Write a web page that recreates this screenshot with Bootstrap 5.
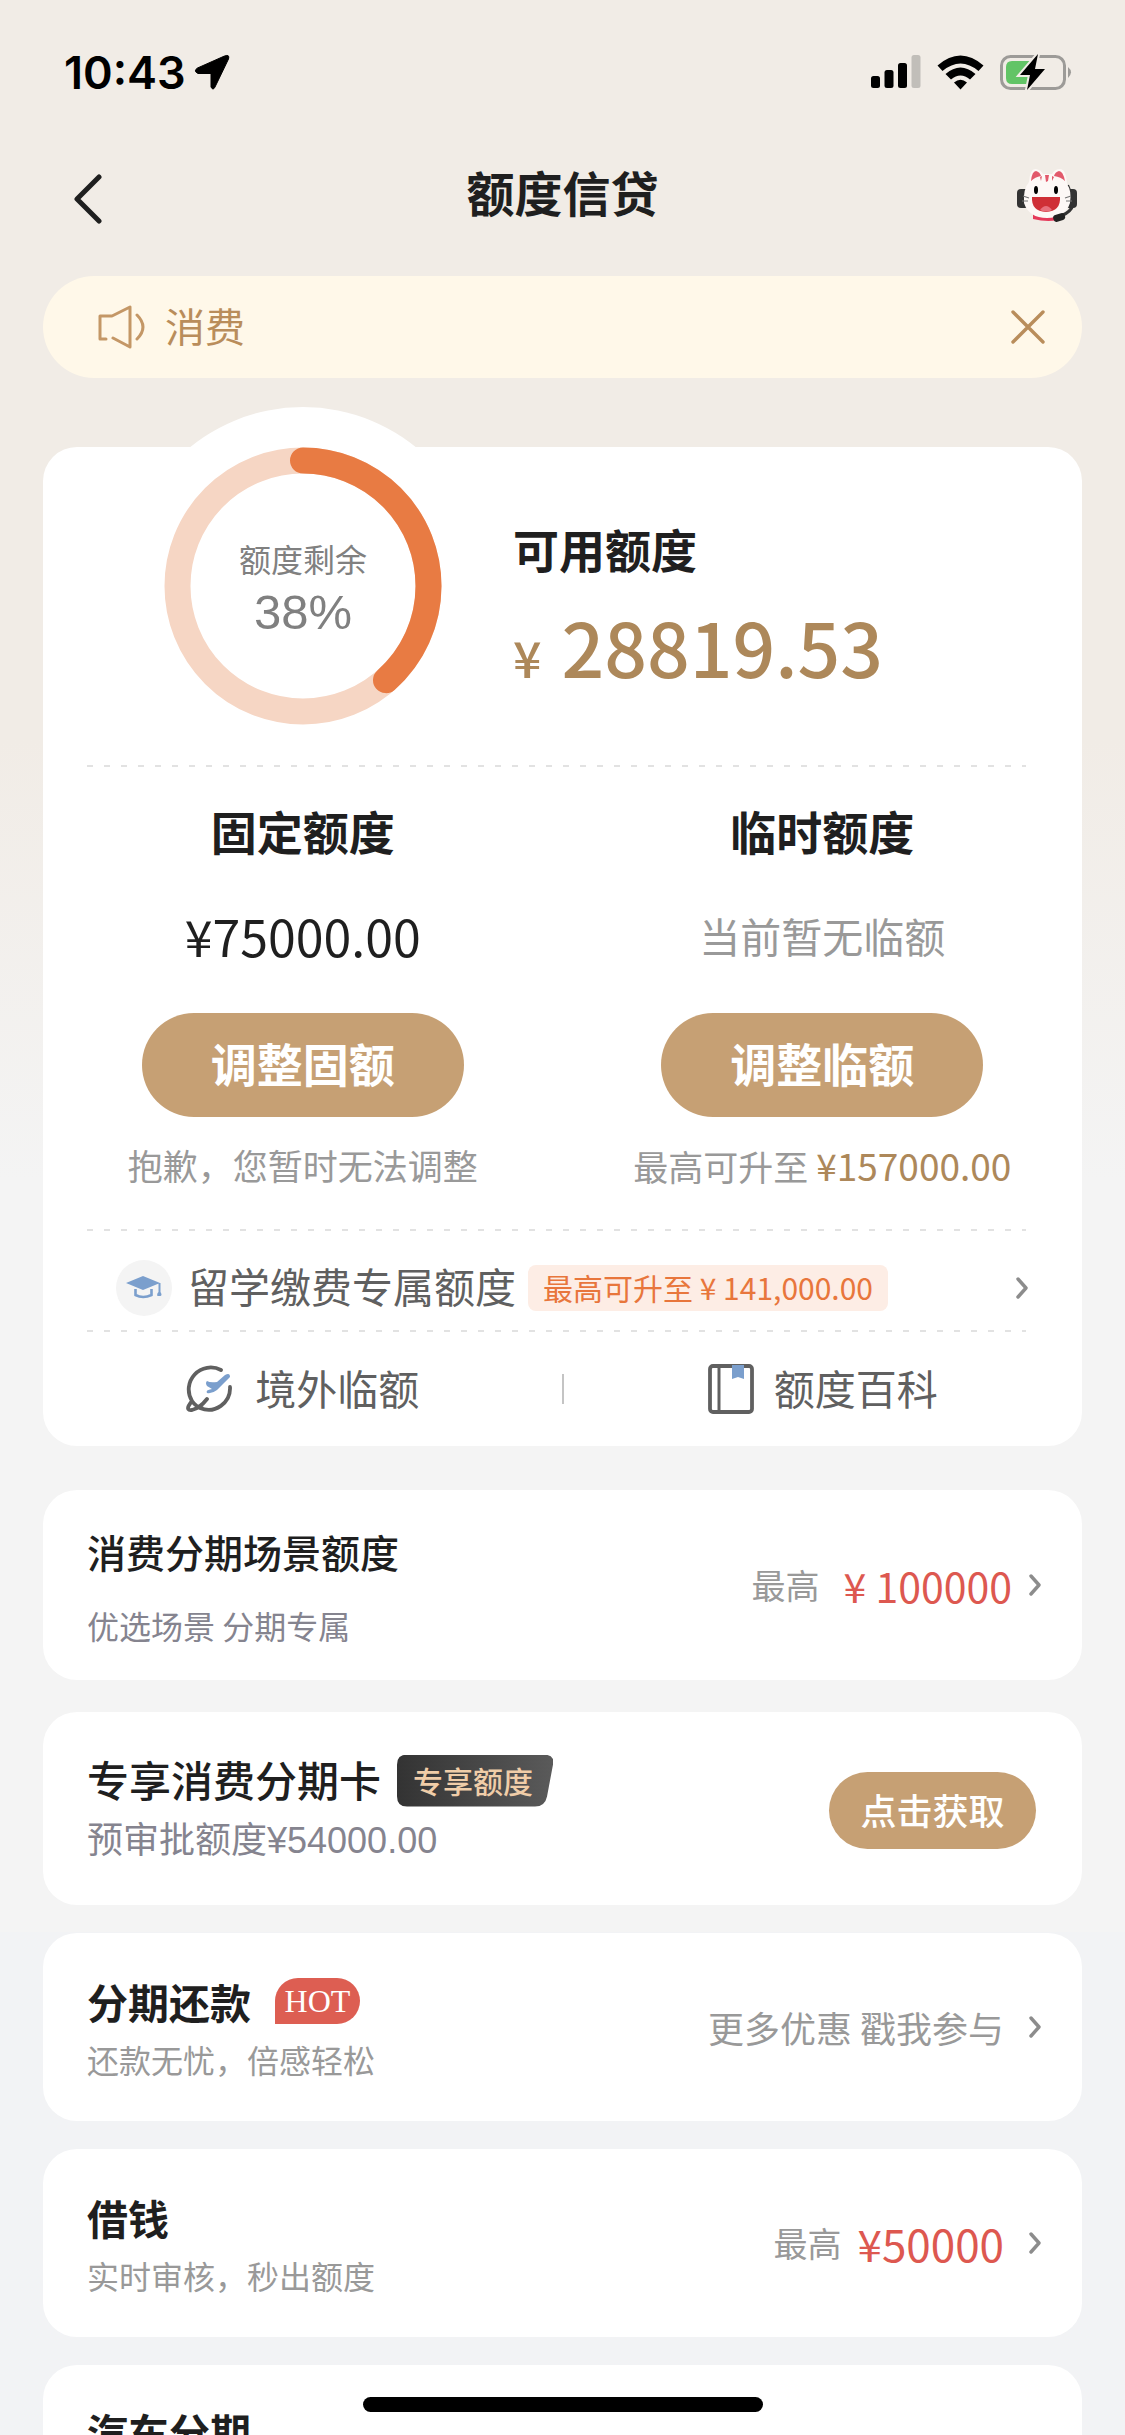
<!DOCTYPE html>
<html lang="zh-CN">
<head>
<meta charset="utf-8">
<meta name="viewport" content="width=device-width, initial-scale=1">
<title>额度信贷</title>
<link href="https://cdn.jsdelivr.net/npm/bootstrap@5.3.0/dist/css/bootstrap.min.css" rel="stylesheet">
<style>
:root{--gold:#c6a074;--gold-text:#ad885a;--ink:#1f1f1f;--edge:43px}
html,body{height:100%;overflow:hidden}
body{font-family:"Noto Sans CJK SC",sans-serif;color:var(--ink);line-height:1;background:linear-gradient(#f1ece6 0,#f1ece6 740px,#f4f4f4 1180px,#f4f4f4 1932px,#f2f3f5 1932px) no-repeat #f2f3f5}
a{color:inherit;text-decoration:none}
svg{display:block;flex:none}
.statusbar{height:144px;padding:0 53px 0 64px}
.clock{font:600 45px/1 Inter,sans-serif;color:#000}
.topbar{height:132px;padding:0 47px}
.topbar h1{font-size:48px;line-height:70px;padding-top:12px}
.topbar .side{width:62px}
.topbar .back{padding:30px 0 0 26px}
.page-x{padding:0 var(--edge)}
.notice{height:102px;border-radius:51px;background:#fff8e9;color:#b98d5b;padding:0 37px 0 55px;font-size:40px}
.lift{padding-bottom:4px}
.panel{background:#fff;border-radius:34px}
.summary{margin-top:69px}
.gauge-row{height:318px;padding-left:81px}
.gauge{width:358px;height:358px;margin-top:-40px;border-radius:50%;background:#fff}
.gauge-label{color:#808080;inset:0;padding-top:12px}
.gauge-label small{font-size:32px;line-height:40px}
.gauge-label span{font:49px/68px "Liberation Sans",sans-serif}
.avail{padding:69px 0 0 31px}
.t46{font-size:46px;line-height:64px;font-weight:700}
.money{color:var(--gold-text);font-weight:500;line-height:76px;margin-top:28px}
.money .yen{font-size:50px;margin-right:20px}
.money .num{font-size:75px}
.dash{height:2px;margin:0 56px 0 44px;background:repeating-linear-gradient(90deg,#e2e2e2 0 6px,transparent 6px 17px)}
.limits{height:462px;padding-top:31px}
.amount{font-size:50px;line-height:64px;margin-top:41px}
.muted41{font-size:41px;color:#999}
.pill{border:0;border-radius:60px;background:var(--gold);color:#fff;font-weight:700;padding:0 0 6px}
.pill-lg{width:322px;height:104px;font-size:46px;margin-top:46px;line-height:64px}
.hint{font-size:35px;line-height:50px;color:#999;margin-top:23px}
.hint b{font-size:37px;font-weight:400;color:var(--gold-text)}
.study{height:99px;padding:14px 53px 0 73px;color:#606060;font-size:41px}
.cap{width:56px;height:56px;border-radius:50%;background:#f4f4f4}
.tag{background:#fdede5;color:#e8763c;border-radius:8px;height:46px;padding:0 15px 2px;margin-left:12px;font-size:30px}
.links{height:114px;color:#606060;font-size:41px}
.links .bar{width:2px;height:30px;background:#c4c4c4}
.links a{gap:20px}
.rowcard{padding:0 40px 0 44px;height:188px}
.rowcard+.rowcard{margin-top:28px}
.rowcard h2{font-size:41px;line-height:56px;font-weight:700;margin:0}
.rowcard p{font-size:32px;line-height:44px;margin:0;color:#999}
.scene{height:190px;margin-top:44px}
.scene h2{font-size:39px;font-weight:500}
.scene p,.vip p{color:#85848f}
.vip p{font-size:36px;font-family:"Liberation Sans","Noto Sans CJK SC",sans-serif}
.vip h2{font-size:42px;font-weight:500}
.scene+.rowcard{margin-top:32px;height:193px;padding-right:46px}
.last{padding-top:38px}
.most{font-size:34px;color:#999}
.most-lg{font-size:36px}
.red{color:#dd5850;font-size:41px}
.red-lg{font-size:44px}
.vtag{height:52px;width:156px;padding:0 0 2px 16px;font-size:30px;font-weight:500;color:#f0cda8;background:linear-gradient(90deg,#333,#5a5a5a);clip-path:path("M10 0H146Q158 0 156 10L150 42Q148 52 138 52H10Q0 52 0 42V10Q0 0 10 0Z")}
.pill-sm{width:207px;height:77px;font-size:36px;font-weight:500;margin-top:4px;padding-bottom:4px}
.hot{height:46px;width:85px;border-radius:23px 23px 23px 0;background:#dd5e52;color:#fff;font:32px/46px "Liberation Serif",serif}
.home{position:fixed;left:50%;bottom:23px;width:400px;height:15px;margin-left:-200px;border-radius:8px;background:#000}
</style>
</head>
<body>
<svg width="0" height="0" class="position-absolute" aria-hidden="true"><symbol id="chev" viewBox="0 0 14 22"><path d="M3 2l8 9-8 9" fill="none" stroke="#8c8c8c" stroke-width="3.4" stroke-linecap="round" stroke-linejoin="round"/></symbol></svg>

<div class="statusbar d-flex justify-content-between align-items-center">
  <div class="d-flex align-items-center gap-2">
    <span class="clock">10:43</span>
    <svg width="36" height="36" viewBox="0 0 36 36"><path d="M30.500 2Q36 0 34.500 5L21 33Q19 37 17 33V19.500H4Q-1 17 3.500 14Z" stroke="#000" stroke-linejoin="round"/></svg>
  </div>
  <div class="d-flex align-items-center gap-3">
    <svg width="50" height="34" viewBox="0 0 50 34"><rect y="21" width="9" height="12" rx="2.500"/><rect x="13.500" y="15" width="9" height="18" rx="2.500"/><rect x="27" y="8" width="9" height="25" rx="2.500"/><rect x="40.500" width="9" height="33" rx="2.500" fill="#c1beb9"/></svg>
    <svg width="47" height="35" viewBox="0 0 47 35"><path d="M0.500 10.500Q23.500-9.500 46.500 10.500L41.500 16Q23.500 1 5.500 16ZM8.500 19Q23.500 6 38.500 19L33 24.500Q23.500 16.500 14 24.500ZM17 27.500Q23.500 22 30 27.500L23.500 34.500Z"/></svg>
    <svg width="72" height="38" viewBox="0 0 72 38"><rect x="1.500" y="3.500" width="63" height="32" rx="9" fill="none" stroke="#9d9b98" stroke-width="3"/><path d="M68 14q6 5 0 11z" fill="#9d9b98"/><path d="M12 8H34V31H12Q6 31 6 25V14Q6 8 12 8Z" fill="#62c466"/><path d="M38 1L20 22h10l-3 15L45 16H35Z" stroke="#f1ece6" stroke-width="4" paint-order="stroke"/></svg>
  </div>
</div>

<header class="topbar d-flex justify-content-between">
  <a href="#" class="side back" aria-label="返回"><svg width="30" height="50" viewBox="0 0 30 50"><path d="M26 3L4 25l22 22" fill="none" stroke="#1f1f1f" stroke-width="5" stroke-linecap="round" stroke-linejoin="round"/></svg></a>
  <h1 class="fw-bold m-0">额度信贷</h1>
  <a href="#" class="side pt-4" aria-label="客服"><svg width="62" height="56" viewBox="0 0 62 56">
    <path d="M52 17L54 22" stroke="#333" stroke-width="2"/><rect x="1" y="21" width="12" height="19" rx="4" fill="#333"/><rect x="49" y="21" width="12" height="19" rx="4" fill="#333"/>
    <path d="M17 46h30v5q-14 4-30 0z" fill="#e5395a"/>
    <path d="M13 14Q14 0 20 1q5 1 7 5h9q3-5 8-5 6 0 7 15 5 7 3 19-5 15-23 15T8 35Q7 21 13 14Z" fill="#fdf8f6"/>
    <path d="M15 13Q16 3 20 3q4 1 5 5-6 1-10 5ZM49 13Q47 3 43 3q-4 1-5 5 7 1 11 5ZM29 7h4l-1 6-2 1ZM24 9l2-1-1 5ZM36 8l2 1-2 4Z" fill="#e2596b"/>
    <ellipse cx="20" cy="22" rx="2" ry="4"/><ellipse cx="40" cy="22" rx="2" ry="4"/>
    <path d="M16 29h28q1 14-14 15Q15 43 16 29Z" fill="#cf2f36"/><path d="M24 42q6-8 12 0-6 3-12 0Z" fill="#e86f7c"/>
    <path d="M7 28l6 2M6 33h6M55 28l-6 2M56 33h-6" stroke="#777" stroke-width="1.200"/><path d="M57 37Q55 44 45 48" fill="none" stroke="#333" stroke-width="3"/><rect x="37" y="46" width="12" height="7" rx="3" transform="rotate(-18 43 49)" fill="#222"/>
  </svg></a>
</header>

<main class="page-x">
  <div class="notice d-flex align-items-center">
    <svg width="47" height="44" viewBox="0 0 47 44"><path d="M8 34H2V11h12L32 2V42L15 33M39 10q12 12 0 24" fill="none" stroke="#c49766" stroke-width="3" stroke-linejoin="round" stroke-linecap="round"/></svg>
    <span class="ms-3 ps-1 lift">消费</span>
    <button type="button" class="btn p-0 border-0 ms-auto" aria-label="关闭"><svg width="34" height="34" viewBox="0 0 34 34"><path d="M2 2l30 30M32 2L2 32" stroke="#b98d5b" stroke-width="3.400" stroke-linecap="round"/></svg></button>
  </div>

  <section class="panel summary">
    <div class="gauge-row d-flex">
      <div class="gauge position-relative flex-shrink-0">
        <svg width="358" height="358" viewBox="0 0 358 358"><g fill="none" stroke-width="26" transform="rotate(-90 179 179)"><circle cx="179" cy="179" r="125.500" stroke="#f6d6c4"/><circle cx="179" cy="179" r="125.500" stroke="#e87b43" pathLength="100" stroke-dasharray="38.500 61.500" stroke-linecap="round"/></g></svg>
        <div class="gauge-label position-absolute d-flex flex-column align-items-center justify-content-center"><small>额度剩余</small><span>38%</span></div>
      </div>
      <div class="avail">
        <div class="t46">可用额度</div>
        <div class="money d-flex align-items-baseline"><span class="yen">¥</span><span class="num">28819.53</span></div>
      </div>
    </div>
    <div class="dash"></div>
    <div class="limits row g-0 text-center">
      <div class="col-6">
        <div class="t46">固定额度</div>
        <div class="amount">¥75000.00</div>
        <button type="button" class="pill pill-lg">调整固额</button>
        <div class="hint">抱歉，您暂时无法调整</div>
      </div>
      <div class="col-6">
        <div class="t46">临时额度</div>
        <div class="amount muted41">当前暂无临额</div>
        <button type="button" class="pill pill-lg">调整临额</button>
        <div class="hint">最高可升至<b class="ms-2">¥157000.00</b></div>
      </div>
    </div>
    <div class="dash"></div>
    <a href="#" class="study d-flex align-items-center">
      <span class="cap d-flex align-items-center justify-content-center"><svg width="36" height="24" viewBox="0 0 36 24"><path d="M0 7L17 0l17 7-17 7ZM32.500 7h2v9q2 3 0 4h-3q-1-2 1-4Z" fill="#7b9fcd"/><path d="M9.500 13v6q7.500 4 16 0v-6" fill="none" stroke="#7b9fcd" stroke-width="2.600"/></svg></span>
      <span class="ms-3 lift">留学缴费专属额度</span>
      <span class="tag d-flex align-items-center">最高可升至 ¥ 141,000.00</span>
      <svg class="ms-auto" width="14" height="22"><use href="#chev"/></svg>
    </a>
    <div class="dash"></div>
    <nav class="links d-flex align-items-center">
      <a href="#" class="w-50 d-flex align-items-center justify-content-center">
        <svg width="50" height="50" viewBox="0 0 50 50"><path d="M36 6A22 22 0 0 0 7 37M45 23A21.500 21.500 0 0 1 15 44M7 37Q-1 47 7 46 15 44 22 35M7 37q4 6 10 7" fill="none" stroke="#606060" stroke-width="3.800" stroke-linecap="round"/><path d="M40 11q5-3 5 2L32 26q-5 4-10 3-2-3 5-4l-5-3q-2-3 0-5 3 2 10 1Z" fill="#7b9fcd"/></svg>
        <span class="lift">境外临额</span></a>
      <span class="bar"></span>
      <a href="#" class="w-50 d-flex align-items-center justify-content-center">
        <svg width="46" height="50" viewBox="0 0 46 50"><rect x="2" y="2" width="42" height="46" rx="3" fill="none" stroke="#606060" stroke-width="3.800"/><path d="M11 2V48" stroke="#606060" stroke-width="3"/><path d="M24 1H36V15L30 13 24 15Z" fill="#7b9fcd"/></svg>
        <span class="lift">额度百科</span></a>
    </nav>
  </section>

  <a href="#" class="panel rowcard scene d-flex align-items-center">
    <div class="me-auto"><h2>消费分期场景额度</h2><p class="mt-4">优选场景 分期专属</p></div>
    <span class="most">最高</span><span class="red ms-4">¥ 100000</span>
    <svg class="ms-3" width="14" height="22"><use href="#chev"/></svg>
  </a>
  <div class="panel rowcard vip d-flex align-items-center">
    <div class="me-auto pb-1"><div class="d-flex align-items-center gap-3"><h2 class="lift">专享消费分期卡</h2><span class="vtag d-flex align-items-center">专享额度</span></div><p class="mt-2">预审批额度¥54000.00</p></div>
    <button type="button" class="pill pill-sm">点击获取</button>
  </div>
  <a href="#" class="panel rowcard d-flex align-items-center">
    <div class="me-auto"><div class="d-flex align-items-center gap-4"><h2>分期还款</h2><span class="hot text-center">HOT</span></div><p class="mt-2">还款无忧，倍感轻松</p></div>
    <span class="most most-lg">更多优惠 戳我参与</span>
    <svg class="ms-4" width="14" height="22"><use href="#chev"/></svg>
  </a>
  <a href="#" class="panel rowcard d-flex align-items-center">
    <div class="me-auto"><h2>借钱</h2><p class="mt-2">实时审核，秒出额度</p></div>
    <span class="most">最高</span><span class="red red-lg ms-3">¥50000</span>
    <svg class="ms-4" width="14" height="22"><use href="#chev"/></svg>
  </a>
  <a href="#" class="panel rowcard last d-flex align-items-start">
    <h2>汽车分期</h2>
  </a>
</main>
<div class="home"></div>
<script src="https://cdn.jsdelivr.net/npm/bootstrap@5.3.0/dist/js/bootstrap.bundle.min.js"></script>
</body>
</html>
